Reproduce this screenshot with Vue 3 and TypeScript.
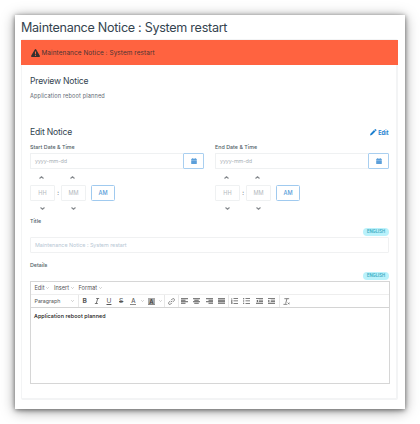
<script setup lang="ts">
interface DateField {
  id: string
  label: string
}

const dateFields: DateField[] = [
  { id: 'start', label: 'Start Date & Time' },
  { id: 'end', label: 'End Date & Time' },
]
const menus: string[] = ['Edit', 'Insert', 'Format']

// Horizontal bars for each toolbar glyph: [x, y, width]
const aligns: number[][][] = [
  [[0, 0, 14], [0, 3, 9], [0, 6, 14], [0, 9, 9]],
  [[0, 0, 14], [2.5, 3, 9], [0, 6, 14], [2.5, 9, 9]],
  [[0, 0, 14], [5, 3, 9], [0, 6, 14], [5, 9, 9]],
  [[0, 0, 14], [0, 3, 14], [0, 6, 14], [0, 9, 14]],
]
</script>

<template>
  <main class="window">
    <h1>Maintenance Notice : System restart</h1>
    <section class="card">
      <header class="banner">
        <svg class="warn" viewBox="0 0 18 16">
          <path fill-rule="evenodd" d="M9 0Q9.9 0 10.4.9L17.7 13.600Q18.300 16 16.400 16H1.600Q-.3 16 .3 13.600L7.600.9Q8.100 0 9 0ZM7.800 5L8.200 10.300H9.800L10.200 5ZM9 11.300A1.300 1.300 0 1 0 9 13.900A1.300 1.300 0 1 0 9 11.300Z" />
        </svg>
        <span>Maintenance Notice : System restart</span>
      </header>
      <div class="body">
        <h2>Preview Notice</h2>
        <p class="preview">Application reboot planned</p>
        <div class="edit-head">
          <h2 class="edit-title">Edit Notice</h2>
          <a class="edit-link">
            <svg viewBox="0 0 16 16"><path d="M1 11.500L9.800 2.700L13.300 6.200L4.500 15L0 16ZM10.700 1.800L12 .5Q13 -.4 14 .5L15.500 2Q16.400 3 15.500 4L14.200 5.300Z" /></svg>
            <span>Edit</span>
          </a>
        </div>
        <div class="dates">
          <div v-for="field in dateFields" :key="field.id" class="date">
            <div class="label">{{ field.label }}</div>
            <div class="date-input">
              <div class="date-box"><span>yyyy-mm-dd</span></div>
              <div class="date-btn">
                <svg viewBox="0 0 14 15"><path d="M3 0H5V2H9V0H11V2H12.500Q14 2 14 3.500V5H0V3.500Q0 2 1.500 2H3ZM0 5.500H14V13.500Q14 15 12.500 15H1.500Q0 15 0 13.500Z" /></svg>
              </div>
            </div>
            <div class="arrows up">
              <svg viewBox="0 0 10 6"><path d="M1 5L5 1.500L9 5" /></svg>
              <svg viewBox="0 0 10 6"><path d="M1 5L5 1.500L9 5" /></svg>
            </div>
            <div class="time">
              <div class="num"><span>HH</span></div>
              <span class="colon">:</span>
              <div class="num"><span>MM</span></div>
              <div class="ampm"><span>AM</span></div>
            </div>
            <div class="arrows down">
              <svg viewBox="0 0 10 6"><path d="M1 1L5 4.500L9 1" /></svg>
              <svg viewBox="0 0 10 6"><path d="M1 1L5 4.500L9 1" /></svg>
            </div>
          </div>
        </div>
        <div class="label title-label">Title</div>
        <div class="badge"><span>ENGLISH</span></div>
        <div class="title-input"><span>Maintenance Notice : System restart</span></div>
        <div class="label details-label">Details</div>
        <div class="badge"><span>ENGLISH</span></div>
        <div class="editor">
          <div class="menubar">
            <span v-for="menu in menus" :key="menu" class="menu">
              {{ menu }}<svg class="caret" viewBox="0 0 6 4"><path d="M.5.5L3 3L5.500.5" /></svg>
            </span>
          </div>
          <div class="toolbar">
            <div class="group format">
              <span>Paragraph</span>
              <svg class="caret" viewBox="0 0 6 4"><path d="M.5.5L3 3L5.500.5" /></svg>
            </div>
            <div class="group styles">
              <i class="tool bold">B</i>
              <i class="tool"><svg class="italic" viewBox="0 0 14 14"><path d="M5 1H12M2 13H9M8.800 1L5.200 13" /></svg></i>
              <i class="tool underline">U</i>
              <i class="tool strike">S</i>
              <i class="tool"><b class="fore">A</b></i>
              <i class="drop"><svg class="caret" viewBox="0 0 6 4"><path d="M.5.5L3 3L5.500.5" /></svg></i>
              <i class="tool"><b class="back">A</b></i>
              <i class="drop"><svg class="caret" viewBox="0 0 6 4"><path d="M.5.5L3 3L5.500.5" /></svg></i>
            </div>
            <div class="group single">
              <svg class="line-icon" viewBox="0 0 16 16"><path d="M6.500 9.500L9.500 6.500M7 5L10 2Q12 .5 14 2Q15.500 4 14 6L11 9M9 11L6 14Q4 15.500 2 14Q.5 12 2 10L5 7" /></svg>
            </div>
            <div class="group four">
              <i v-for="(bars, n) in aligns" :key="n" class="tool">
                <svg class="bars" viewBox="0 0 14 11"><rect v-for="(bar, k) in bars" :key="k" :x="bar[0]" :y="bar[1]" :width="bar[2]" height="1.9" /></svg>
              </i>
            </div>
            <div class="group four lists">
              <i class="tool">
                <svg class="bars" viewBox="0 0 14 11"><path d="M5 0H14V1.500H5ZM5 4.700H14V6.200H5ZM5 9.400H14V10.900H5ZM1 0H2.300V3H1ZM0 4.200H3V5L1.500 6.200H3V7H0V6.200L1.500 5H0ZM0 8H3V11H0V10.200H2V9.800H.8V9.200H2V8.800H0Z" /></svg>
              </i>
              <i class="tool">
                <svg class="bars" viewBox="0 0 14 11"><path d="M5 0H14V1.500H5ZM5 4.700H14V6.200H5ZM5 9.400H14V10.900H5ZM0 0H2.400V2H0ZM0 4.500H2.400V6.500H0ZM0 9H2.400V11H0Z" /></svg>
              </i>
              <i class="tool">
                <svg class="bars" viewBox="0 0 14 11"><path d="M0 0H14V1.700H0ZM5.500 3H14V4.700H5.500ZM5.500 6H14V7.700H5.500ZM0 9.200H14V10.900H0ZM4 2.800V8L.5 5.400Z" /></svg>
              </i>
              <i class="tool">
                <svg class="bars" viewBox="0 0 14 11"><path d="M0 0H14V1.700H0ZM5.500 3H14V4.700H5.500ZM5.500 6H14V7.700H5.500ZM0 9.200H14V10.900H0ZM.5 2.800V8L4 5.400Z" /></svg>
              </i>
            </div>
            <div class="single">
              <svg class="line-icon clear" viewBox="0 0 16 16"><path d="M3 1.500H14M9 1.500L6 13M1 14.500H9M11 10.500L15 14.500M15 10.500L11 14.500" /></svg>
            </div>
          </div>
          <div class="content"><span>Application reboot planned</span></div>
        </div>
      </div>
    </section>
  </main>
</template>

<style>
body {
  background: #fff;
}
</style>

<style scoped>
* {
  box-sizing: border-box;
}
.window {
  width: 390px;
  height: 394px;
  margin: 15px;
  padding: 3px 7px 0 6px;
  background: #fff;
  box-shadow: 0 1px 5px rgba(0, 0, 0, 0.52), 0 2px 13px rgba(0, 0, 0, 0.36);
  font-family: Inter, "Liberation Sans", sans-serif;
  font-size: 5.6px;
  line-height: 8px;
  color: #34444f;
}
svg {
  display: block;
  flex: none;
}
h1 {
  margin: 0;
  height: 21px;
  font-size: 12.6px;
  line-height: 19px;
  font-weight: 400;
  letter-spacing: -0.29px;
  white-space: nowrap;
}
h2 {
  margin: 0;
  font-size: 8.6px;
  line-height: 12px;
  font-weight: 400;
  letter-spacing: -0.2px;
}
.card {
  height: 361px;
  border: 1px solid #f3f4f5;
  border-width: 1px 2px 2px 1px;
  border-radius: 2px;
}
.banner {
  display: flex;
  align-items: center;
  gap: 2px;
  height: 25px;
  margin: 0 -2px 0 -1px;
  padding-left: 9.5px;
  background: #ff6340;
  color: #4b3434;
  font-size: 6.4px;
  letter-spacing: 0.1px;
}
.warn {
  width: 9px;
  height: 8px;
  fill: #35302f;
}
.body {
  padding: 10px 7px 0 8px;
}
.preview {
  margin: 5px 0 0;
  color: #5f6b74;
  letter-spacing: 0.14px;
}
.edit-head {
  display: flex;
  justify-content: space-between;
  align-items: center;
  height: 12px;
  margin-top: 26px;
}
.edit-link {
  display: flex;
  align-items: center;
  gap: 1.5px;
  padding: 1px 0.5px 0 0;
  color: #1c7fcf;
  font-size: 5.5px;
  font-weight: 700;
}
.edit-link svg {
  width: 6.5px;
  height: 6.5px;
  fill: #1c7fcf;
}
.dates {
  display: flex;
  gap: 11px;
  margin-top: 5px;
}
.date {
  width: 174px;
}
.label {
  height: 8px;
  font-weight: 500;
  font-size: 5.3px;
  letter-spacing: 0.03px;
  color: #4d5b65;
}
.date-input {
  display: flex;
  height: 16px;
  margin-top: 2px;
}
.date-box {
  flex: 1;
  display: flex;
  align-items: center;
  padding-left: 4px;
  border: 1px solid #eff1f2;
  border-right: 0;
  border-radius: 1px 0 0 1px;
  color: #a9b0b6;
  font-size: 5.4px;
  letter-spacing: -0.1px;
}
.date-btn {
  display: flex;
  align-items: center;
  justify-content: center;
  width: 21px;
  border: 1px solid #a9cff0;
  border-radius: 1px;
}
.date-btn svg {
  width: 6px;
  height: 6px;
  fill: #5b9fda;
}
.arrows {
  display: flex;
  gap: 25.5px;
  height: 16px;
  align-items: center;
  padding-left: 9px;
}
.arrows.down {
  height: 14px;
  padding-left: 10px;
}
.arrows svg {
  width: 5px;
  height: 3px;
  fill: none;
  stroke: #85898d;
  stroke-width: 2.3;
}
.time {
  display: flex;
  align-items: center;
  height: 16px;
}
.num {
  display: flex;
  align-items: center;
  justify-content: center;
  width: 25px;
  height: 16px;
  border: 1px solid #eff1f2;
  border-radius: 1px;
  color: #b2b8bd;
}
.colon {
  width: 6px;
  text-align: center;
  font-size: 6px;
}
.ampm {
  display: flex;
  align-items: center;
  justify-content: center;
  width: 24px;
  height: 16px;
  margin-left: 5px;
  border: 1px solid #a0caef;
  border-radius: 1.5px;
  color: #559bd8;
  font-weight: 500;
}
.title-label {
  margin-top: 2px;
}
.badge {
  display: flex;
  align-items: center;
  justify-content: center;
  width: 26px;
  height: 8px;
  margin: 3px 0 0 auto;
  border-radius: 4px;
  background: #baf2fb;
  color: #39a9c1;
  font-size: 4.2px;
  font-weight: 600;
}
.title-input {
  display: flex;
  align-items: center;
  height: 16px;
  margin-top: 1px;
  padding-left: 4px;
  border: 1px solid #f0f1f2;
  border-radius: 1px;
  color: #b8c7d4;
  font-size: 5.4px;
  letter-spacing: -0.03px;
}
.details-label {
  margin-top: 8px;
}
.editor {
  height: 103px;
  margin: 1px -1px 0 0;
  border: 1px solid #d6d6d6;
}
.menubar {
  display: flex;
  gap: 5px;
  height: 12px;
  padding-left: 3.5px;
  align-items: center;
  color: #555;
}
.menu {
  display: flex;
  align-items: center;
  gap: 1.5px;
}
.caret {
  width: 3px;
  height: 2px;
  fill: none;
  stroke: #999;
  stroke-width: 1;
}
.toolbar {
  display: flex;
  height: 14px;
  border-top: 1px solid #eee;
  border-bottom: 1px solid #d4d4d4;
  color: #555;
}
.group {
  display: flex;
  align-items: center;
  border-right: 1px solid #e8e8e8;
}
.format {
  width: 47.5px;
  justify-content: space-between;
  padding: 0 4px 0 3.5px;
}
.format span {
  font-size: 5.3px;
}
.styles {
  width: 86px;
}
.tool {
  display: flex;
  align-items: center;
  justify-content: center;
  width: 12.3px;
  font-style: normal;
  font-size: 6.6px;
}
.bold {
  font-weight: 700;
}
.italic {
  width: 6px;
  height: 6px;
  fill: none;
  stroke: #555;
  stroke-width: 1.9;
}
.underline {
  text-decoration: underline;
}
.strike {
  text-decoration: line-through;
}
.fore,
.back {
  width: 6px;
  height: 7px;
  line-height: 6px;
  font-size: 6px;
  font-weight: 500;
  text-align: center;
  border-bottom: 1px solid #888;
}
.back {
  width: 7px;
  line-height: 7px;
  background: #aaa;
  color: #333;
}
.drop {
  display: flex;
  width: 6px;
  justify-content: center;
}
.single {
  display: flex;
  width: 14px;
  align-items: center;
  justify-content: center;
}
.line-icon {
  width: 7px;
  height: 7px;
  fill: none;
  stroke: #666;
  stroke-width: 1.8;
}
.four {
  width: 50px;
}
.lists {
  width: 51px;
}
.bars {
  width: 7px;
  height: 6px;
  fill: #555;
}
.content {
  padding: 4px 3px;
  color: #111;
  font-size: 5.4px;
  font-weight: 500;
  letter-spacing: 0.08px;
}
</style>
